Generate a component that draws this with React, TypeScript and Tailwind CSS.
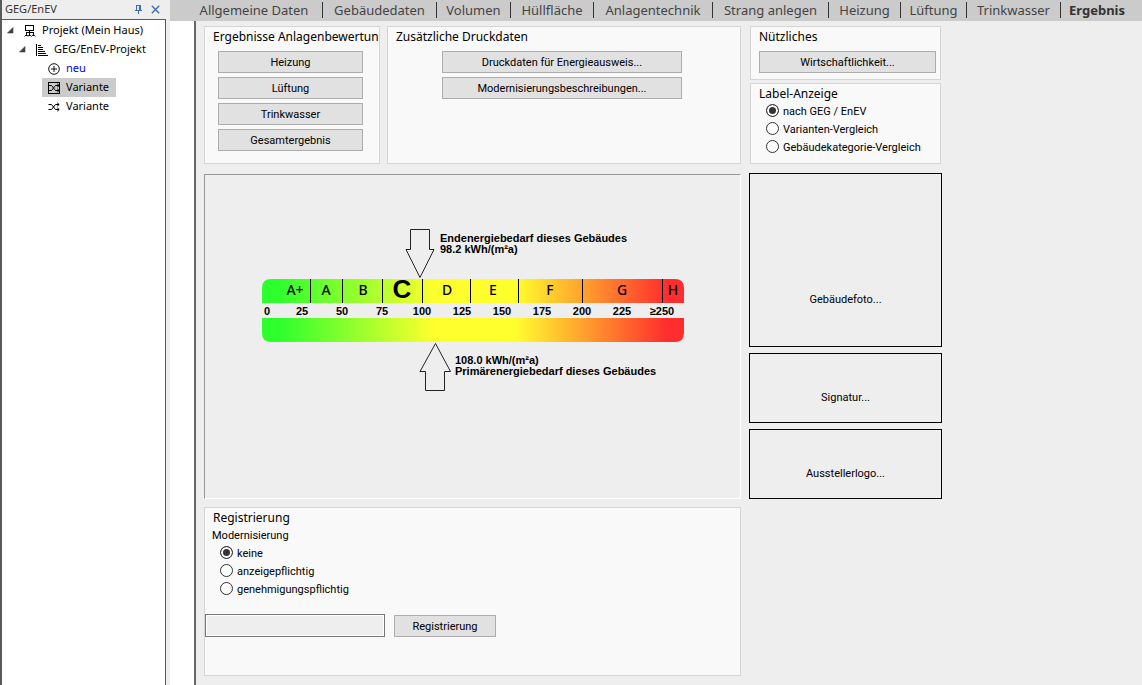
import { useState } from "react";
import type { ReactNode } from "react";

const tabs = [
  { label: "Allgemeine Daten", width: "w-[137px]" },
  { label: "Gebäudedaten", width: "w-[114px]" },
  { label: "Volumen", width: "w-[74px]" },
  { label: "Hüllfläche", width: "w-[83px]" },
  { label: "Anlagentechnik", width: "w-[119px]" },
  { label: "Strang anlegen", width: "w-[116px]" },
  { label: "Heizung", width: "w-[72px]" },
  { label: "Lüftung", width: "w-[66px]" },
  { label: "Trinkwasser", width: "w-[94px]" },
  { label: "Ergebnis", width: "w-[72px]" },
];

const classes = [
  { name: "A+", x: 33 },
  { name: "A", x: 64 },
  { name: "B", x: 101 },
  { name: "D", x: 185 },
  { name: "E", x: 231 },
  { name: "F", x: 288 },
  { name: "G", x: 360 },
  { name: "H", x: 411 },
];

const dividers = [48, 80, 120, 160, 208, 256, 320, 400];

const ticks = [
  { label: "0", x: 5 },
  { label: "25", x: 40 },
  { label: "50", x: 80 },
  { label: "75", x: 120 },
  { label: "100", x: 160 },
  { label: "125", x: 200 },
  { label: "150", x: 240 },
  { label: "175", x: 280 },
  { label: "200", x: 320 },
  { label: "225", x: 360 },
  { label: "≥250", x: 400 },
];

/* ---------- icons ---------- */

function PinIcon() {
  return (
    <svg width="9" height="9" viewBox="0 0 9 9" fill="none" stroke="#3f6cb0" shapeRendering="crispEdges">
      <path d="M2.5 5V0.5H6.5V5M5.5 0.5V5M1 5.5H8M4.5 6V9" />
    </svg>
  );
}

function CloseIcon() {
  return (
    <svg width="9" height="9" viewBox="0 0 9 9" fill="none" stroke="#3f6cb0" strokeWidth="1.4">
      <path d="M0.8 0.8L8.2 8.2M8.2 0.8L0.8 8.2" />
    </svg>
  );
}

function Expander() {
  return (
    <svg width="7" height="7" viewBox="0 0 7 7" className="shrink-0">
      <path d="M6 0.5V6H0.5Z" fill="#404040" stroke="#404040" strokeWidth="0.6" />
    </svg>
  );
}

function ProjectIcon() {
  return (
    <svg width="12" height="12" viewBox="0 0 12 12" fill="none" stroke="#000" className="shrink-0">
      <path d="M1.5 0.5H9.5V5.5H1.5Z" shapeRendering="crispEdges" />
      <path d="M5.5 6V11M2.5 10.5V7.5H9.5V10.5" shapeRendering="crispEdges" />
      <path d="M0.5 11.5L2.5 9.5L4 11.3L5.5 9.5L7.5 11.3L9.5 9.5L11.3 11.5" strokeWidth="0.9" />
    </svg>
  );
}

function BarsIcon() {
  return (
    <svg width="12" height="12" viewBox="0 0 12 12" fill="none" stroke="#000" shapeRendering="crispEdges" className="shrink-0">
      <path d="M0.5 0V12M2 1.5H5M2 3.5H7M2 5.5H7M2 7.5H9M2 9.5H10M2 11.5H12" />
    </svg>
  );
}

function PlusIcon() {
  return (
    <svg width="12" height="12" viewBox="0 0 12 12" fill="none" stroke="#111" className="shrink-0">
      <circle cx="6" cy="6" r="5.3" />
      <path d="M3 6H9M6 3V9" />
    </svg>
  );
}

function ShuffleIcon({ boxed = false }: { boxed?: boolean }) {
  return (
    <svg width="12" height="12" viewBox="0 0 12 12" fill="none" stroke="#000" className="shrink-0">
      {boxed && <path d="M0.5 0.5H11.5V11.5H0.5Z" shapeRendering="crispEdges" />}
      <path d="M0.5 3.5H3.5L7.5 8.5H11M0.5 8.5H3.5L7.5 3.5H11" />
      <path d="M9.2 1.8L11.2 3.5L9.2 5.2M9.2 6.8L11.2 8.5L9.2 10.2" />
    </svg>
  );
}

/* ---------- building blocks ---------- */

function Group({ title, className = "", children }: { title: string; className?: string; children?: ReactNode }) {
  return (
    <section className={`border border-[#d5d5d5] bg-[#f9f9f9] ${className}`}>
      <h2 className="pt-[2px] pl-2 text-[12px] leading-[15px] whitespace-nowrap">{title}</h2>
      {children}
    </section>
  );
}

function PushButton({ className = "", children }: { className?: string; children: ReactNode }) {
  return (
    <button
      type="button"
      className={`h-[22px] border border-[#adadad] bg-[#e1e1e1] pt-[2px] font-[Roboto,sans-serif] text-[11px] leading-[18px] hover:bg-[#e5f1fb] ${className}`}
    >
      {children}
    </button>
  );
}

function RadioList({ name, options }: { name: string; options: string[] }) {
  const [selected, setSelected] = useState(options[0]);
  return (
    <div className="px-[15px] font-[Roboto,sans-serif]">
      {options.map((option) => (
        <label key={option} className="flex h-[18px] items-center gap-1 text-[11px] leading-[14px] whitespace-nowrap">
          <input
            type="radio"
            name={name}
            checked={selected === option}
            onChange={() => setSelected(option)}
            className="size-[13px] shrink-0 appearance-none rounded-full border border-[#333] bg-white checked:bg-[#333] checked:shadow-[inset_0_0_0_2px_white]"
          />
          <span className="pt-[3px]">{option}</span>
        </label>
      ))}
    </div>
  );
}

function ImageSlot({ className, children }: { className: string; children: ReactNode }) {
  return (
    <button
      type="button"
      className={`w-full border border-black font-[Roboto,sans-serif] text-[11px] leading-4 ${className}`}
    >
      {children}
    </button>
  );
}

function Sidebar() {
  return (
    <aside className="flex w-[170px] shrink-0 flex-col border-l-2 border-[#5a5a5a] bg-[#eeeeee]">
      <header className="flex h-[19px] items-center pr-[10px] pl-[3px] text-[11px] text-[#333]">
        <span className="flex-1">GEG/EnEV</span>
        <div className="flex gap-2">
          <button type="button" aria-label="Anheften"><PinIcon /></button>
          <button type="button" aria-label="Schließen"><CloseIcon /></button>
        </div>
      </header>
      <ul className="mr-1 flex-1 border-t border-r border-[#5a5a5a] bg-white pt-px text-[11px] whitespace-nowrap">
        <li className="flex h-[19px] items-center pl-[5px]">
          <Expander />
          <span className="ml-[10px] flex items-center gap-[6px]"><ProjectIcon />Projekt (Mein Haus)</span>
        </li>
        <li className="flex h-[19px] items-center pl-[17px]">
          <Expander />
          <span className="ml-[10px] flex items-center gap-[6px]"><BarsIcon />GEG/EnEV-Projekt</span>
        </li>
        <li className="flex h-[19px] items-center pl-[46px] text-[#0000f0]">
          <span className="flex items-center gap-[6px]"><PlusIcon />neu</span>
        </li>
        <li className="flex h-[19px] items-center pl-10">
          <span className="flex h-full w-[74px] items-center gap-[6px] bg-[#cbcbcb] pl-[6px]"><ShuffleIcon boxed />Variante</span>
        </li>
        <li className="flex h-[19px] items-center pl-[46px]">
          <span className="flex items-center gap-[6px]"><ShuffleIcon />Variante</span>
        </li>
      </ul>
    </aside>
  );
}

function EnergyLabel() {
  return (
    <svg width="422" height="164" viewBox="0 0 422 164" className="max-w-full">
      <defs>
        <linearGradient id="scale">
          <stop offset="0.04" stopColor="#2dff2d" />
          <stop offset="0.41" stopColor="#ffff2d" />
          <stop offset="0.6" stopColor="#ffff2d" />
          <stop offset="0.96" stopColor="#ff2d2d" />
        </linearGradient>
      </defs>

      {/* Endenergie */}
      <path d="M148.5 1.5H167.5V21.5H172L158 49.5L144 21.5H148.5Z" fill="none" stroke="#222" />
      <g fontFamily="'Liberation Sans', Arial, sans-serif" fontSize="11" fontWeight="700">
        <text x="178" y="14">Endenergiebedarf dieses Gebäudes</text>
        <text x="178" y="25">98.2 kWh/(m²a)</text>
      </g>

      {/* scale */}
      <path d="M0 75V60Q0 51 9 51H413Q422 51 422 60V75Z" fill="url(#scale)" />
      <path d="M0 90V105Q0 114 9 114H413Q422 114 422 105V90Z" fill="url(#scale)" />
      {dividers.map((x) => (
        <rect key={x} x={x} y="51" width="1" height="24" fill="#000" />
      ))}
      <g fontFamily="'Noto Sans', sans-serif" fontSize="14" fontWeight="500" textAnchor="middle">
        {classes.map((c) => (
          <text key={c.name} x={c.x} y="67">{c.name}</text>
        ))}
      </g>
      <text x="140" y="70" fontFamily="'Liberation Sans', Arial, sans-serif" fontSize="26" fontWeight="700" textAnchor="middle">C</text>
      <g fontFamily="'Liberation Sans', Arial, sans-serif" fontSize="11" fontWeight="700" textAnchor="middle">
        {ticks.map((t) => (
          <text key={t.label} x={t.x} y="87">{t.label}</text>
        ))}
      </g>

      {/* Primärenergie */}
      <path d="M163.5 162.5H182.5V143.5H188.5L173.5 115.5L158 143.5H163.5Z" fill="none" stroke="#222" />
      <g fontFamily="'Liberation Sans', Arial, sans-serif" fontSize="11" fontWeight="700">
        <text x="193" y="136">108.0 kWh/(m²a)</text>
        <text x="193" y="147">Primärenergiebedarf dieses Gebäudes</text>
      </g>
    </svg>
  );
}

export default function App() {
  const [activeTab, setActiveTab] = useState("Ergebnis");

  return (
    <div className="flex min-h-screen bg-[#eeeeee] font-['Noto_Sans',sans-serif] text-black">
      <Sidebar />
      <div className="flex min-w-0 flex-1 flex-col">
        <nav className="flex h-[21px] items-start overflow-hidden bg-[#cbcbcb] pt-[2px] pl-4">
          {tabs.map((tab) => (
            <button
              key={tab.label}
              type="button"
              onClick={() => setActiveTab(tab.label)}
              className={`h-4 shrink-0 border-r border-[#333] text-[13px] leading-4 whitespace-nowrap last:border-r-0 ${tab.width} ${
                activeTab === tab.label ? "font-bold text-[#333]" : "text-[#444]"
              }`}
            >
              {tab.label}
            </button>
          ))}
        </nav>

        <div className="flex flex-1">
          <div className="w-[26px] shrink-0 border-r-2 border-[#666] bg-white" />
          <main className="flex flex-1 gap-2 pt-[5px] pb-2 pl-2">
            {/* results column */}
            <div className="flex max-w-[537px] flex-1 flex-col">
              <div className="flex h-[138px] gap-[7px]">
                <Group title="Ergebnisse Anlagenbewertun" className="w-[176px] shrink-0">
                  <div className="flex flex-col gap-1 pt-[7px] pr-4 pl-[13px]">
                    <PushButton>Heizung</PushButton>
                    <PushButton>Lüftung</PushButton>
                    <PushButton>Trinkwasser</PushButton>
                    <PushButton>Gesamtergebnis</PushButton>
                  </div>
                </Group>
                <Group title="Zusätzliche Druckdaten" className="flex-1">
                  <div className="flex flex-col items-center gap-1 pt-[7px] pr-1">
                    <PushButton className="w-[240px]">Druckdaten für Energieausweis...</PushButton>
                    <PushButton className="w-[240px]">Modernisierungsbeschreibungen...</PushButton>
                  </div>
                </Group>
              </div>

              <div className="mt-[10px] flex h-[325px] justify-center border border-t-[#999] border-r-white border-b-white border-l-[#999] pt-[53px]">
                <EnergyLabel />
              </div>

              <Group title="Registrierung" className="mt-2 h-[169px]">
                <h3 className="px-[7px] pt-[3px] font-[Roboto,sans-serif] text-[11px] leading-[15px]">Modernisierung</h3>
                <RadioList name="modernisierung" options={["keine", "anzeigepflichtig", "genehmigungspflichtig"]} />
                <div className="mt-[17px] flex items-center gap-[9px]">
                  <input
                    type="text"
                    aria-label="Registriernummer"
                    className="h-[23px] w-[180px] border border-[#777] bg-[#eeeeee] px-1 text-[11px] shadow-[inset_0_0_0_1px_white]"
                  />
                  <PushButton className="w-[102px]">Registrierung</PushButton>
                </div>
              </Group>
            </div>

            {/* side column */}
            <div className="flex w-[193px] shrink-0 flex-col">
              <div className="flex h-[138px] flex-col gap-[3px] px-px">
                <Group title="Nützliches" className="h-[54px] shrink-0">
                  <div className="flex flex-col pt-[7px] pr-1 pl-2">
                    <PushButton>Wirtschaftlichkeit...</PushButton>
                  </div>
                </Group>
                <Group title="Label-Anzeige" className="flex-1">
                  <RadioList name="label" options={["nach GEG / EnEV", "Varianten-Vergleich", "Gebäudekategorie-Vergleich"]} />
                </Group>
              </div>
              <div className="mt-[9px] flex flex-col gap-[6px]">
                <ImageSlot className="h-[174px] pt-20">Gebäudefoto...</ImageSlot>
                <ImageSlot className="h-[70px] pt-5">Signatur...</ImageSlot>
                <ImageSlot className="h-[70px] pt-5">Ausstellerlogo...</ImageSlot>
              </div>
            </div>
          </main>
        </div>
      </div>
    </div>
  );
}
